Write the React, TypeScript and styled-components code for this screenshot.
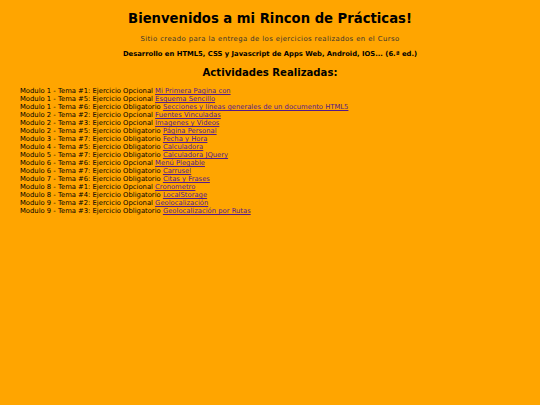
import styled, { createGlobalStyle } from "styled-components";

const GlobalStyle = createGlobalStyle`
  html, body {
    margin: 0;
    padding: 0;
    background-color: #ffa500;
  }
  body {
    font-family: "DejaVu Sans", Verdana, sans-serif;
    color: #000;
  }
`;

const Page = styled.div`
  padding: 10px 20px;
`;

const Title = styled.h1`
  margin: 0;
  text-align: center;
  font-size: 13.2px;
  line-height: 17px;
`;

const Sub = styled.p`
  margin: 8px 0 0;
  text-align: center;
  font-size: 6.9px;
  line-height: 8px;
  letter-spacing: 0.4px;
  color: #333;
`;

const Course = styled.p`
  margin: 7px 0 0;
  text-align: center;
  font-size: 6.8px;
  line-height: 8px;
  font-weight: bold;
`;

const Heading = styled.h2`
  margin: 9px 0 0;
  text-align: center;
  font-size: 10.1px;
  line-height: 12px;
`;

const List = styled.div`
  margin-top: 8px;
  font-size: 6.8px;
  line-height: 8px;
`;

const Row = styled.div``;

const Link = styled.a`
  color: #551a8b;
  text-decoration: underline;
`;

const items: [string, string][] = [
  ["Modulo 1 - Tema #1: Ejercicio Opcional", "Mi Primera Pagina con"],
  ["Modulo 1 - Tema #5: Ejercicio Opcional", "Esquema Sencillo"],
  ["Modulo 1 - Tema #6: Ejercicio Obligatorio", "Secciones y líneas generales de un documento HTML5"],
  ["Modulo 2 - Tema #2: Ejercicio Opcional", "Fuentes Vinculadas"],
  ["Modulo 2 - Tema #3: Ejercicio Opcional", "Imagenes y Videos"],
  ["Modulo 2 - Tema #5: Ejercicio Obligatorio", "Página Personal"],
  ["Modulo 3 - Tema #7: Ejercicio Obligatorio", "Fecha y Hora"],
  ["Modulo 4 - Tema #5: Ejercicio Obligatorio", "Calculadora"],
  ["Modulo 5 - Tema #7: Ejercicio Obligatorio", "Calculadora JQuery"],
  ["Modulo 6 - Tema #6: Ejercicio Opcional", "Menú Plegable"],
  ["Modulo 6 - Tema #7: Ejercicio Obligatorio", "Carrusel"],
  ["Modulo 7 - Tema #6: Ejercicio Obligatorio", "Citas y Frases"],
  ["Modulo 8 - Tema #1: Ejercicio Opcional", "Cronometro"],
  ["Modulo 8 - Tema #4: Ejercicio Obligatorio", "LocalStorage"],
  ["Modulo 9 - Tema #2: Ejercicio Opcional", "Geolocalización"],
  ["Modulo 9 - Tema #3: Ejercicio Obligatorio", "Geolocalización por Rutas"],
];

export default function App() {
  return (
    <>
      <GlobalStyle />
      <Page>
        <Title>Bienvenidos a mi Rincon de Prácticas!</Title>
        <Sub>Sitio creado para la entrega de los ejercicios realizados en el Curso</Sub>
        <Course>Desarrollo en HTML5, CSS y Javascript de Apps Web, Android, IOS... (6.ª ed.)</Course>
        <Heading>Actividades Realizadas:</Heading>
        <List>
          {items.map(([label, link]) => (
            <Row key={label + link}>
              {label} <Link href="#">{link}</Link>
            </Row>
          ))}
        </List>
      </Page>
    </>
  );
}
